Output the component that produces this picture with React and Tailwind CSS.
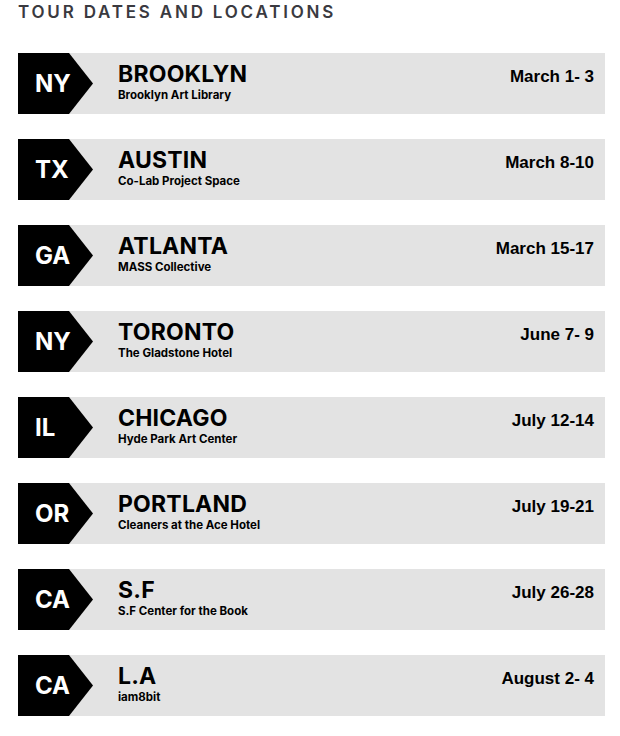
const tours = [
  { st: "NY", city: "BROOKLYN", venue: "Brooklyn Art Library", date: "March 1- 3" },
  { st: "TX", city: "AUSTIN", venue: "Co-Lab Project Space", date: "March 8-10" },
  { st: "GA", city: "ATLANTA", venue: "MASS Collective", date: "March 15-17" },
  { st: "NY", city: "TORONTO", venue: "The Gladstone Hotel", date: "June 7- 9" },
  { st: "IL", city: "CHICAGO", venue: "Hyde Park Art Center", date: "July 12-14" },
  { st: "OR", city: "PORTLAND", venue: "Cleaners at the Ace Hotel", date: "July 19-21" },
  { st: "CA", city: "S.F", venue: "S.F Center for the Book", date: "July 26-28" },
  { st: "CA", city: "L.A", venue: "iam8bit", date: "August 2- 4" },
];

/* ── one tour stop row ── */
function TourRow({ st, city, venue, date }) {
  return (
    <div className="flex h-[61px] bg-[#e3e3e3]">
      <div className="w-[75px] shrink-0 flex items-center pl-[17px] bg-black text-white font-['Inter',sans-serif] font-bold text-[24px] leading-none [clip-path:polygon(0_0,51px_0,75px_50%,51px_100%,0_100%)]">
        {st}
      </div>
      <div className="flex-1 flex flex-col pl-[25px] pt-[7px] font-['Inter',sans-serif] text-black">
        <span className="text-[23px] font-bold leading-[28px] tracking-[0.2px]">{city}</span>
        <span className="text-[11.5px] font-bold leading-[14px]">{venue}</span>
      </div>
      <div className="pr-[11px] pt-[14px] font-['Liberation_Sans',Arial,sans-serif] font-bold text-[17px] leading-[20px] text-black">
        {date}
      </div>
    </div>
  );
}

export default function App() {
  return (
    <div className="w-[620px] min-h-[736px] bg-white px-[18px] pt-[2px]">
      <h2 className="font-['Inter',sans-serif] font-semibold text-[17px] leading-[20px] tracking-[2.8px] text-[#3a3a40]">
        TOUR DATES AND LOCATIONS
      </h2>
      <div className="mt-[31px] w-[587px] flex flex-col gap-[25px]">
        {tours.map((t, i) => (
          <TourRow key={i} {...t} />
        ))}
      </div>
    </div>
  );
}
